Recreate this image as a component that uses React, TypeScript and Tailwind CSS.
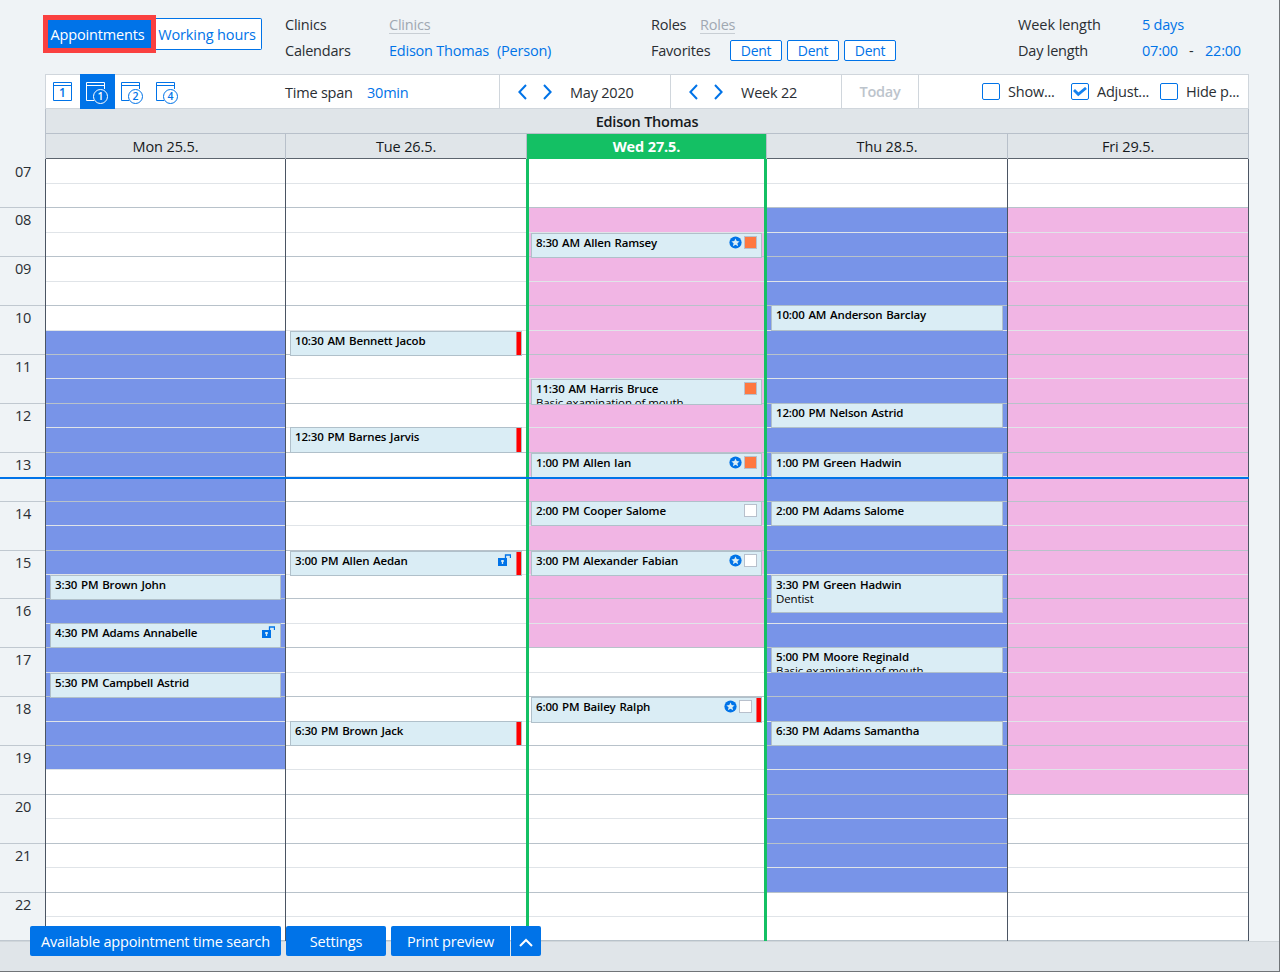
import type { ReactNode } from 'react';
import clsx from 'clsx';

type Tag = 'star' | 'orange' | 'white' | 'lock';

interface Appointment {
  time: string;
  name: string;
  top: number;
  height: number;
  note?: string;
  tags?: Tag[];
  late?: boolean;
}

interface Day {
  label: string;
  column: string;
  header: string;
  inset: string;
  fill: string;
  // first and last half-hour row that belongs to working hours
  work?: [number, number];
  appointments: Appointment[];
}

// Half-hour rows, from 07:00 to 22:30
const ROWS = [
  25, 24, 25, 24, 25, 24, 25, 24, 24, 25, 24, 25, 24, 25, 24, 25,
  24, 24, 25, 24, 25, 24, 25, 24, 24, 25, 24, 25, 24, 25, 24, 24,
];

const HOURS = ['07', '08', '09', '10', '11', '12', '13', '14', '15', '16', '17', '18', '19', '20', '21', '22'];

const DAYS: Day[] = [
  {
    label: 'Mon 25.5.',
    column: 'w-[240px] border-l border-[#4b5563]',
    header: 'w-[240px] border-l',
    inset: 'left-1 right-1',
    fill: 'bg-[#7894e8]',
    work: [7, 24],
    appointments: [
      { time: '3:30 PM', name: 'Brown John', top: 416, height: 25 },
      { time: '4:30 PM', name: 'Adams Annabelle', top: 464, height: 25, tags: ['lock'] },
      { time: '5:30 PM', name: 'Campbell Astrid', top: 514, height: 25 },
    ],
  },
  {
    label: 'Tue 26.5.',
    column: 'w-[241px] border-l border-[#4b5563]',
    header: 'w-[241px] border-l',
    inset: 'left-1 right-1',
    fill: '',
    appointments: [
      { time: '10:30 AM', name: 'Bennett Jacob', top: 172, height: 25, late: true },
      { time: '12:30 PM', name: 'Barnes Jarvis', top: 268, height: 26, late: true },
      { time: '3:00 PM', name: 'Allen Aedan', top: 392, height: 25, tags: ['lock'], late: true },
      { time: '6:30 PM', name: 'Brown Jack', top: 562, height: 25, late: true },
    ],
  },
  {
    label: 'Wed 27.5.',
    column: 'w-[241px] border-x-3 border-[#14c064]',
    header: 'w-[241px] border-x',
    inset: 'left-0.5 right-0.5',
    fill: 'bg-[#f1b5e4]',
    work: [2, 19],
    appointments: [
      { time: '8:30 AM', name: 'Allen Ramsey', top: 74, height: 25, tags: ['star', 'orange'] },
      { time: '11:30 AM', name: 'Harris Bruce', top: 220, height: 26, note: 'Basic examination of mouth', tags: ['orange'] },
      { time: '1:00 PM', name: 'Allen Ian', top: 294, height: 25, tags: ['star', 'orange'] },
      { time: '2:00 PM', name: 'Cooper Salome', top: 342, height: 25, tags: ['white'] },
      { time: '3:00 PM', name: 'Alexander Fabian', top: 392, height: 25, tags: ['star', 'white'] },
      { time: '6:00 PM', name: 'Bailey Ralph', top: 538, height: 26, tags: ['star', 'white'], late: true },
    ],
  },
  {
    label: 'Thu 28.5.',
    column: 'w-[240px]',
    header: 'w-[240px]',
    inset: 'left-1 right-1',
    fill: 'bg-[#7894e8]',
    work: [2, 29],
    appointments: [
      { time: '10:00 AM', name: 'Anderson Barclay', top: 146, height: 26 },
      { time: '12:00 PM', name: 'Nelson Astrid', top: 244, height: 25 },
      { time: '1:00 PM', name: 'Green Hadwin', top: 294, height: 25 },
      { time: '2:00 PM', name: 'Adams Salome', top: 342, height: 25 },
      { time: '3:30 PM', name: 'Green Hadwin', top: 416, height: 38, note: 'Dentist' },
      { time: '5:00 PM', name: 'Moore Reginald', top: 488, height: 26, note: 'Basic examination of mouth' },
      { time: '6:30 PM', name: 'Adams Samantha', top: 562, height: 25 },
    ],
  },
  {
    label: 'Fri 29.5.',
    column: 'w-[242px] border-x border-[#4b5563]',
    header: 'w-[242px] border-x',
    inset: 'left-1 right-1',
    fill: 'bg-[#f1b5e4]',
    work: [2, 25],
    appointments: [],
  },
];

function StarIcon() {
  return (
    <svg width="13" height="13" viewBox="0 0 13 13">
      <circle cx="6.5" cy="6.5" r="6.1" fill="#0073e8" />
      <path d="M6.5 2.4l1.2 2.7 2.9.3-2.2 1.9.7 2.9-2.6-1.5-2.6 1.5.7-2.9-2.2-1.9 2.9-.3z" fill="#daedf5" />
    </svg>
  );
}

function LockIcon() {
  return (
    <svg width="13" height="12" viewBox="0 0 13 12">
      <rect x="0" y="4" width="9" height="8" fill="#0073e8" />
      <path d="M7.5 4V1h5v3" fill="none" stroke="#0073e8" strokeWidth="1.3" />
      <path d="M3 7h3M4.5 6v4" stroke="#daedf5" strokeWidth="1.3" />
    </svg>
  );
}

function TagIcon({ tag }: { tag: Tag }) {
  if (tag === 'star') return <StarIcon />;
  if (tag === 'lock') return <LockIcon />;
  return (
    <span
      className={clsx('h-[13px] w-[13px] border border-[#b8c0cc]', tag === 'orange' ? 'bg-[#ff7840]' : 'bg-white')}
    />
  );
}

function AppointmentCard({ item, inset }: { item: Appointment; inset: string }) {
  const locked = item.tags?.includes('lock');

  return (
    <div
      className={clsx('absolute flex overflow-hidden border border-[#b0c0ca] bg-[#daedf5] text-black', inset)}
      style={{ top: item.top, height: item.height }}
    >
      <div className="min-w-0 flex-1 pl-1 text-[11.5px] leading-[14px] whitespace-nowrap">
        <div className="mt-0.5 font-semibold tracking-[-0.17px] [word-spacing:1px]">
          {item.time} {item.name}
        </div>
        {item.note && <div className="tracking-[-0.1px]">{item.note}</div>}
      </div>
      {item.tags && (
        <div
          className={clsx(
            'mt-0.5 flex items-start gap-0.5',
            item.late ? (locked ? 'mr-[10px]' : 'mr-[9px]') : locked ? 'mr-[5px]' : 'mr-1',
          )}
        >
          {item.tags.map((tag) => (
            <TagIcon key={tag} tag={tag} />
          ))}
        </div>
      )}
      {item.late && <div className="absolute -top-px -right-px -bottom-px w-1.5 border-x border-[#ee6b70] bg-[#ff0000]" />}
    </div>
  );
}

function DayColumn({ day }: { day: Day }) {
  return (
    <div className={clsx('relative shrink-0 bg-white', day.column)}>
      {ROWS.map((height, row) => (
        <div
          key={row}
          className={clsx(
            'border-b',
            row % 2 ? 'border-[#b8c2ca]' : 'border-[#e0e4e8]',
            day.work && row >= day.work[0] && row <= day.work[1] && day.fill,
          )}
          style={{ height }}
        />
      ))}
      {day.appointments.map((item) => (
        <AppointmentCard key={item.time} item={item} inset={day.inset} />
      ))}
    </div>
  );
}

function CalendarIcon({ count }: { count?: string }) {
  return (
    <svg width="24" height="24" viewBox="0 0 24 24" fill="none" stroke="currentColor">
      {count ? (
        <>
          <path d="M8 18.5H.5V.5h18V7M.5 3.5h18" />
          <circle cx="14.5" cy="14.5" r="7" />
          <text x="14.4" y="18.3" textAnchor="middle" fontSize="10.5" fill="currentColor" stroke="none" className="font-semibold">
            {count}
          </text>
        </>
      ) : (
        <>
          <path d="M.5.5h18v18H.5zM.5 3.5h18" />
          <text x="9.3" y="15.2" textAnchor="middle" fontSize="12" fill="currentColor" stroke="none" className="font-semibold">
            1
          </text>
        </>
      )}
    </svg>
  );
}

function Stepper({ label }: { label: string }) {
  return (
    <div className="flex w-[171px] shrink-0 items-center border-l border-[#d0d6dc]">
      <svg width="34" height="16" viewBox="0 0 34 16" className="ml-[18px]" fill="none" stroke="#0073e8" strokeWidth="2">
        <path d="M8 1L1.4 8 8 15M26 1l6.6 7-6.6 7" />
      </svg>
      <span className="mt-0.5 ml-[18px] whitespace-nowrap">{label}</span>
    </div>
  );
}

function Checkbox({ label, checked }: { label: string; checked?: boolean }) {
  return (
    <label className="flex w-[89px] items-center gap-2 whitespace-nowrap">
      <span className="flex h-[17px] w-[18px] shrink-0 items-center justify-center rounded-xs border border-[#0073e8]">
        {checked && (
          <svg width="14" height="10" viewBox="0 0 14 10" fill="none" stroke="#1482f0" strokeWidth="2.8">
            <path d="M1 3L5.3 7.3 13 1" />
          </svg>
        )}
      </span>
      {label}
    </label>
  );
}

function FooterButton({ className, children }: { className: string; children: ReactNode }) {
  return (
    <button
      className={clsx(
        'flex h-[30px] items-center justify-center bg-[#0073e8] pt-0.5 tracking-[-0.18px] whitespace-nowrap text-white',
        className,
      )}
    >
      {children}
    </button>
  );
}

export default function App() {
  return (
    <div className="relative flex h-[972px] w-[1280px] flex-col overflow-hidden border-r border-b border-[#707478] bg-[#eff3f6] font-['Open_Sans','Noto_Sans',sans-serif] text-[14.5px] tracking-[-0.22px] text-[#2a2e33]">
      <header className="flex h-[74px] shrink-0 pt-3 pl-[43px] leading-[26px] whitespace-nowrap">
        <div className="mt-[3px] flex h-[38px] w-[242px] shrink-0 items-center">
          <button className="h-[38px] w-[113px] border-5 border-[#fa4040] bg-[#0073e8] pt-0.5 pr-1 tracking-[-0.15px] text-white">
            Appointments
          </button>
          <button className="-mt-px h-8 w-[106px] rounded-r-xs border border-l-0 border-[#0073e8] bg-white pt-0.5 pr-[3px] tracking-[-0.12px] text-[#0073e8]">
            Working hours
          </button>
        </div>
        <div className="w-[366px] shrink-0">
          <div className="flex">
            <span className="w-[104px]">Clinics</span>
            <span className="h-[22px] border-b border-[#c8ced4] text-[#a0a8b2]">Clinics</span>
          </div>
          <div className="flex text-[#0073e8]">
            <span className="w-[104px] text-[#2a2e33]">Calendars</span>
            <span>Edison Thomas</span>
            <span className="ml-2">(Person)</span>
          </div>
        </div>
        <div className="w-[367px] shrink-0">
          <div className="flex">
            <span className="w-[49px]">Roles</span>
            <span className="h-[22px] border-b border-[#c8ced4] text-[#a0a8b2]">Roles</span>
          </div>
          <div className="flex items-center">
            <span className="w-[79px]">Favorites</span>
            <div className="-mt-px flex gap-[5px] text-sm leading-[19px] tracking-[-0.3px] text-[#0073e8]">
              <button className="h-[21px] w-[52px] rounded-xs border border-[#0073e8] bg-white">Dent</button>
              <button className="h-[21px] w-[52px] rounded-xs border border-[#0073e8] bg-white">Dent</button>
              <button className="h-[21px] w-[52px] rounded-xs border border-[#0073e8] bg-white">Dent</button>
            </div>
          </div>
        </div>
        <div>
          <div className="flex">
            <span className="w-[124px] tracking-[-0.08px]">Week length</span>
            <span className="text-[#0073e8]">5 days</span>
          </div>
          <div className="flex">
            <span className="w-[124px]">Day length</span>
            <span className="w-[47px] text-[#0073e8]">07:00</span>
            <span className="w-4">-</span>
            <span className="text-[#0073e8]">22:00</span>
          </div>
        </div>
      </header>

      <div className="ml-[45px] flex h-[35px] w-[1204px] shrink-0 border border-[#d0d6dc] bg-white">
        <div className="flex w-[239px] shrink-0 text-[#0073e8]">
          <div className="w-[34px] pt-[7px] pl-[7px]">
            <CalendarIcon />
          </div>
          <div className="-my-px w-[35px] bg-[#0073e8] pt-2 pl-1.5 text-white">
            <CalendarIcon count="1" />
          </div>
          <div className="w-[35px] pt-[7px] pl-1.5">
            <CalendarIcon count="2" />
          </div>
          <div className="w-[35px] pt-[7px] pl-1.5">
            <CalendarIcon count="4" />
          </div>
        </div>
        <div className="flex w-[214px] shrink-0 items-center pt-0.5">
          <span className="w-[82px]">Time span</span>
          <span className="text-[#0073e8]">30min</span>
        </div>
        <Stepper label="May 2020" />
        <Stepper label="Week 22" />
        <div className="flex w-[78px] shrink-0 items-center justify-center border-x border-[#d0d6dc] font-semibold text-[#bcc4cc]">
          Today
        </div>
        <div className="flex flex-1 items-center pl-[63px]">
          <Checkbox label="Show..." />
          <Checkbox label="Adjust..." checked />
          <Checkbox label="Hide p..." />
        </div>
      </div>

      <div className="ml-[45px] w-[1204px] shrink-0 bg-[#e0e5e9] text-center text-[#16191c]">
        <div className="h-[25px] border border-t-0 border-[#b8c0ca] text-[14.5px] leading-[25px] font-semibold">
          Edison Thomas
        </div>
        <div className="flex h-[25px] leading-[25px] tracking-[-0.12px]">
          {DAYS.map((day) => (
            <div
              key={day.label}
              className={clsx(
                'shrink-0 border-[#b8c0ca]',
                day.header,
                day.label.startsWith('Wed') ? 'bg-[#14c064] font-bold text-white' : 'shadow-[inset_0_-1px_0_#5c646e]',
              )}
            >
              {day.label}
            </div>
          ))}
        </div>
      </div>

      <main className="relative flex h-[782px] shrink-0">
        <div className="w-[45px] shrink-0 pl-px text-center text-[14.5px] leading-[23px] tracking-[-0.3px]">
          {HOURS.map((hour, i) => (
            <div
              key={hour}
              className="-ml-px border-b border-[#c0c8d0] pl-px first:pt-px"
              style={{ height: ROWS[i * 2] + ROWS[i * 2 + 1] }}
            >
              {hour}
            </div>
          ))}
        </div>
        {DAYS.map((day) => (
          <DayColumn key={day.label} day={day} />
        ))}
        {/* current time */}
        <div className="absolute top-[318px] left-0 h-0.5 w-[1249px] bg-[#0073e8]" />
      </main>

      <footer className="flex flex-1 border-t border-[#d0d6da] bg-[#e0e5e9] pl-[30px]">
        <div className="relative -top-4 flex h-[30px]">
          <FooterButton className="mr-[5px] w-[251px] rounded-xs">Available appointment time search</FooterButton>
          <FooterButton className="mr-[5px] w-[100px] rounded-xs">Settings</FooterButton>
          <FooterButton className="mr-px w-[119px] rounded-l-xs">Print preview</FooterButton>
          <FooterButton className="w-[30px] rounded-r-xs">
            <svg width="14" height="9" viewBox="0 0 14 9" fill="none" stroke="white" strokeWidth="2">
              <path d="M1 8l6-6 6 6" />
            </svg>
          </FooterButton>
        </div>
      </footer>
    </div>
  );
}
